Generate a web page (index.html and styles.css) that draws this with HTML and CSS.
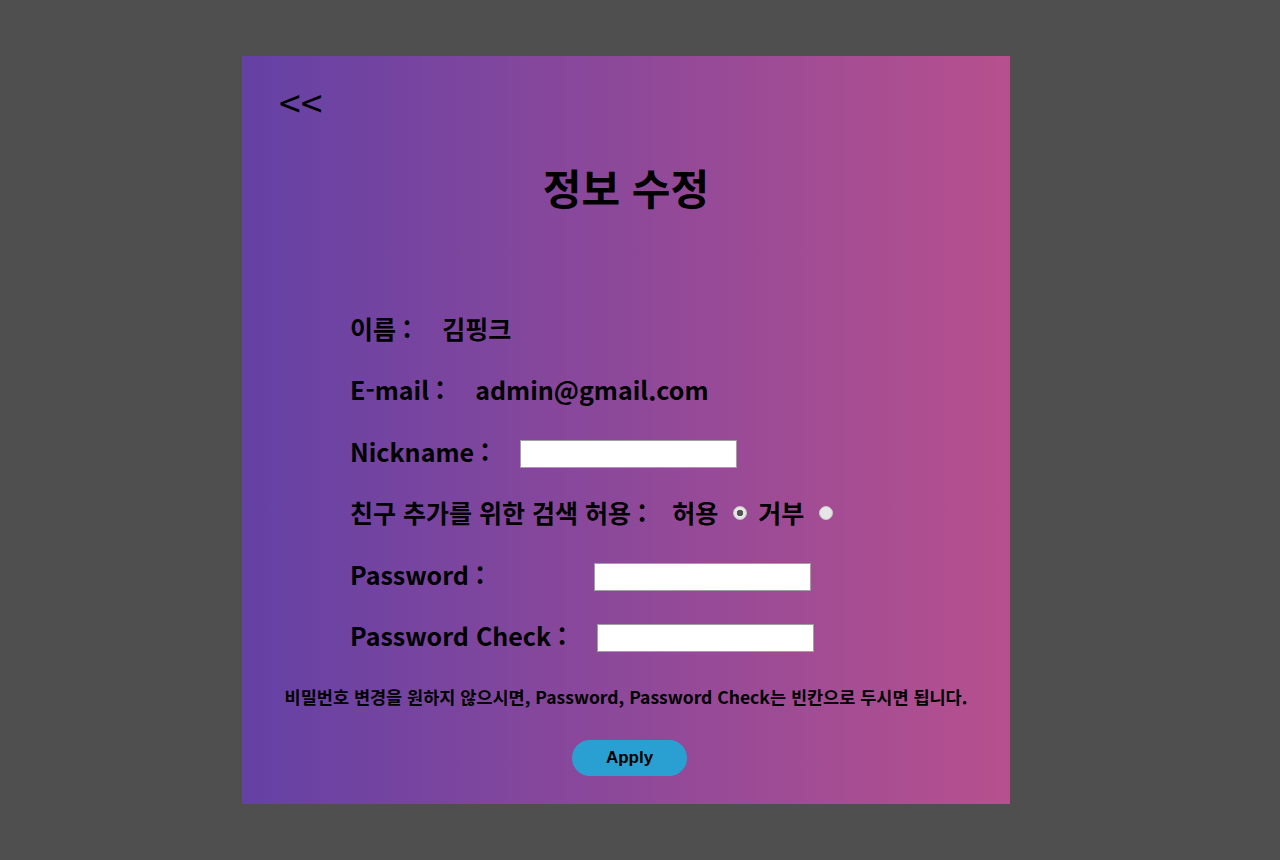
FILE: index.html
```html
<!DOCTYPE html>
<html lang="ko">
<head>
<meta charset="utf-8">
<title>정보 수정</title>
<link rel="stylesheet" href="styles.css">
</head>
<body>
<div class="page">
  <div class="card">
    <div class="back">&lt;&lt;</div>
    <h1 class="title">정보 수정</h1>
    <div class="form">
      <div class="row"><span class="label">이름 :</span><span class="value">김핑크</span></div>
      <div class="row"><span class="label">E-mail :</span><span class="value">admin@gmail.com</span></div>
      <div class="row"><span class="label">Nickname :</span><input class="field" type="text"></div>
      <div class="row"><span class="label label-tight">친구 추가를 위한 검색 허용 :</span>
        <span class="value">허용</span><input class="radio" type="radio" name="s" checked>
        <span class="opt">거부</span><input class="radio" type="radio" name="s">
      </div>
      <div class="row"><span class="label">Password :</span><input class="field field-pw" type="password"></div>
      <div class="row"><span class="label">Password Check :</span><input class="field" type="password"></div>
    </div>
    <p class="note">비밀번호 변경을 원하지 않으시면, Password, Password Check는 빈칸으로 두시면 됩니다.</p>
    <div class="actions"><button class="apply" type="button">Apply</button></div>
  </div>
</div>
</body>
</html>
```
FILE: styles.css
```css
html, body {
  margin: 0;
  padding: 0;
  background: #4f4f4f;
}
.page {
  width: 1280px;
  height: 860px;
  padding-top: 56px;
  box-sizing: border-box;
  font-family: "Noto Sans CJK KR", "Noto Sans", sans-serif;
  color: #000;
}
.card {
  width: 768px;
  height: 748px;
  margin-left: 242px;
  box-sizing: border-box;
  background: linear-gradient(to right, #6441a5, #b7508e);
  padding-top: 20px;
}
.back {
  font-size: 39px;
  line-height: 50px;
  margin-left: 37px;
  font-weight: 400;
}
.title {
  margin: 29px 0 0;
  text-align: center;
  font-size: 42px;
  line-height: 64px;
  font-weight: 700;
}
.form {
  margin: 78px 0 0 108px;
  display: flex;
  flex-direction: column;
}
.row {
  display: flex;
  align-items: center;
  height: 61.5px;
  font-size: 25px;
  font-weight: 700;
}
.label { margin-right: 31px; }
.label-tight { margin-right: 26px; }
.opt { margin-left: 11px; }
.field {
  width: 217px;
  height: 28px;
  box-sizing: border-box;
  border: 1px solid #a0a0a0;
  background: #fff;
  padding: 0;
  margin: 6px 0 0;
}
.field-pw { margin-left: 79px; }
.radio {
  appearance: none;
  -webkit-appearance: none;
  width: 14px;
  height: 14px;
  margin: 2px 0 0 15px;
  border-radius: 50%;
  background: #e6e6e6;
  border: 1px solid #c8c8c8;
  box-sizing: border-box;
}
.radio:checked {
  background: radial-gradient(circle, #555 0 3px, #e6e6e6 3.5px);
}
.note {
  margin: 19px 0 0;
  text-align: center;
  font-size: 17.5px;
  font-weight: 700;
  line-height: 24px;
}
.actions {
  display: flex;
  justify-content: center;
  margin-top: 31px;
}
.apply {
  width: 115px;
  height: 36px;
  margin-left: 7px;
  border: none;
  border-radius: 18px;
  background: #2aa0d2;
  font-family: "Liberation Sans", Arial, sans-serif;
  font-weight: 700;
  font-size: 17px;
  color: #000;
  padding: 0;
}
```
